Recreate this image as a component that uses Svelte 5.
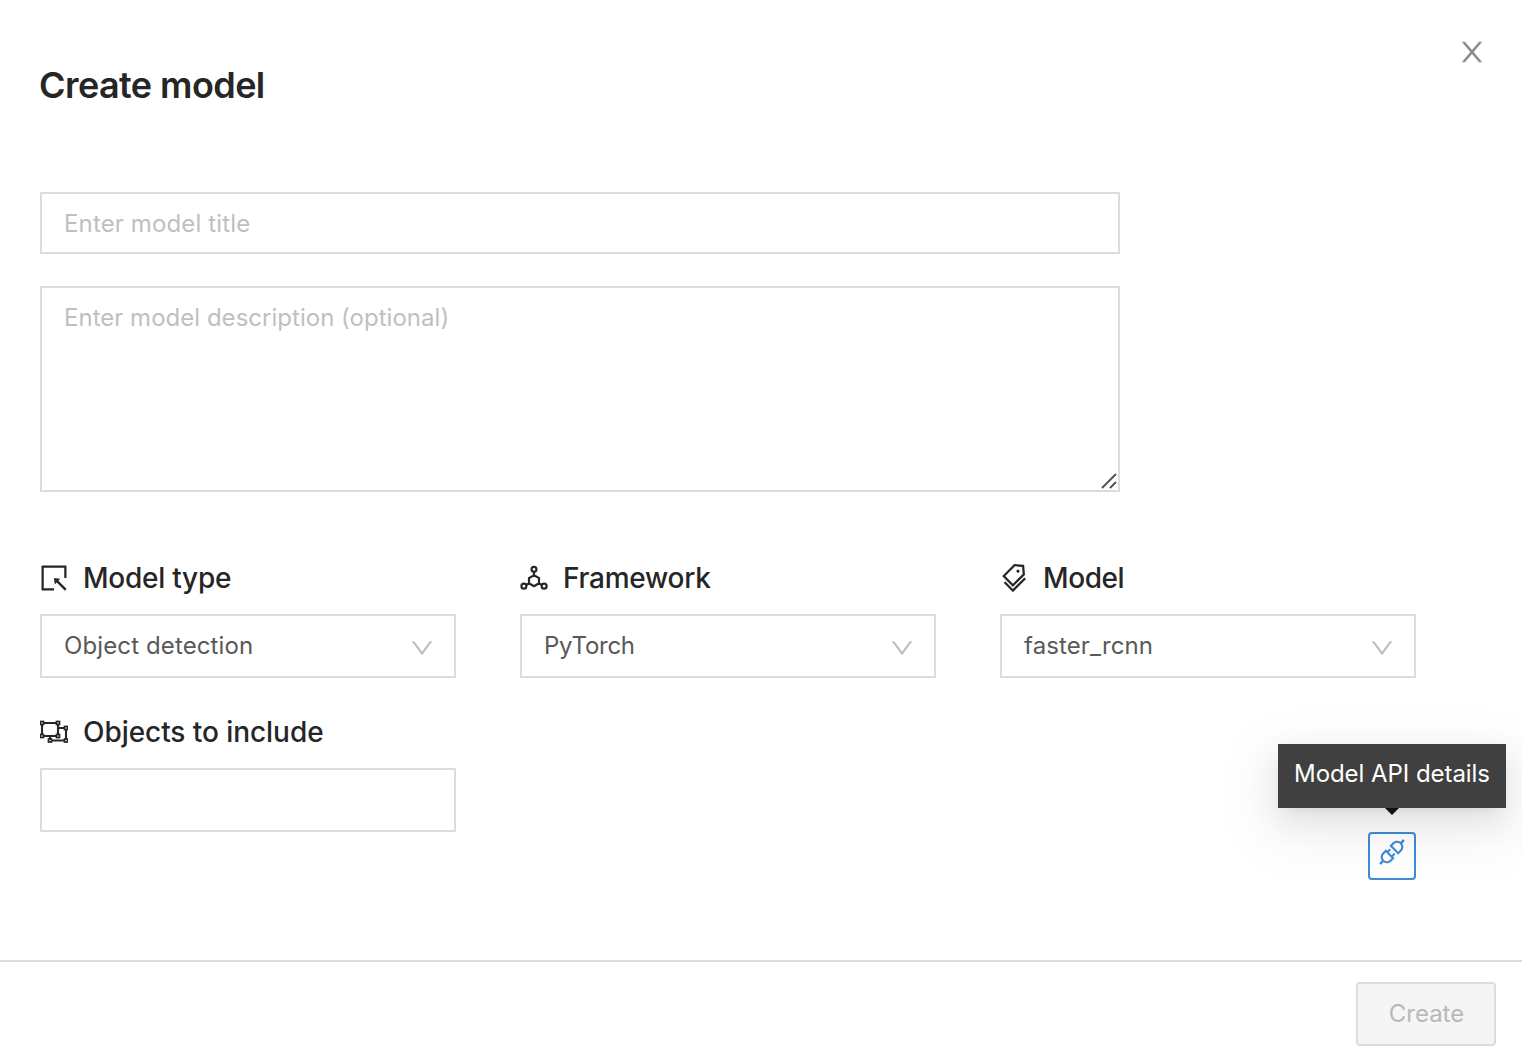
<script>
  const icons = {
    close: 'M563.8 512l262.5-312.9c4.4-5.2.7-13.1-6.1-13.1h-79.8c-4.7 0-9.2 2.1-12.3 5.7L511.6 449.8 295.1 191.7c-3-3.6-7.5-5.7-12.3-5.7H203c-6.8 0-10.5 7.9-6.1 13.1L459.4 512 196.9 824.9A7.95 7.95 0 00203 838h79.8c4.7 0 9.2-2.1 12.3-5.7l216.5-258.1 216.5 258.1c3 3.6 7.5 5.7 12.3 5.7h79.8c6.8 0 10.5-7.9 6.1-13.1L563.8 512z',
    down: 'M884 256h-75c-5.1 0-9.9 2.5-12.9 6.6L512 654.2 227.9 262.6c-3-4.1-7.8-6.6-12.9-6.6h-75c-6.5 0-10.3 7.4-6.5 12.7l352.6 486.1c12.8 17.6 39 17.6 51.7 0l352.6-486.1c3.9-5.3.1-12.7-6.4-12.7z',
    select: 'M880 112H144c-17.7 0-32 14.3-32 32v736c0 17.7 14.3 32 32 32h360c4.4 0 8-3.6 8-8v-56c0-4.4-3.6-8-8-8H184V184h656v320c0 4.4 3.6 8 8 8h56c4.4 0 8-3.6 8-8V144c0-17.7-14.3-32-32-32zM653.3 599.4l52.2-52.2a8.01 8.01 0 00-4.7-13.6l-179.4-21c-5.1-.6-9.5 3.7-8.9 8.9l21 179.4c.8 6.6 8.9 9.4 13.6 4.7l52.4-52.4 256.2 256.2c3.1 3.1 8.2 3.1 11.3 0l42.4-42.4c3.1-3.1 3.1-8.2 0-11.3L653.3 599.4z',
    tags: 'M483.2 790.3L861.4 412c1.7-1.7 2.5-4 2.3-6.3l-25.5-301.4c-.7-7.8-6.8-13.9-14.6-14.6L522.2 64.3c-2.3-.2-4.7.6-6.3 2.3L137.7 444.8a8.03 8.03 0 000 11.3l334.2 334.2c3.1 3.2 8.2 3.2 11.3 0zm62.6-651.7l224.6 19 19 224.6L477.5 694 233.9 450.5l311.9-311.9zm60.16 186.23a48 48 0 1067.88-67.89 48 48 0 10-67.88 67.89zM889.7 539.8l-39.6-39.5a8.03 8.03 0 00-11.3 0l-362 361.3-237.6-237a8.03 8.03 0 00-11.3 0l-39.6 39.5a8.03 8.03 0 000 11.3l243.2 242.8 39.6 39.5c3.1 3.1 8.2 3.1 11.3 0l407.3-406.6c3.1-3.1 3.1-8.2 0-11.3z',
    api: 'M917.7 148.8l-42.4-42.4c-1.6-1.6-3.6-2.3-5.7-2.3s-4.1.8-5.7 2.3l-76.1 76.1a199.27 199.27 0 00-112.1-34.3c-51.2 0-102.4 19.5-141.5 58.6L432.3 308.7a8.03 8.03 0 000 11.3L704 591.7c1.6 1.6 3.6 2.3 5.7 2.3 2 0 4.1-.8 5.7-2.3l101.9-101.9c68.9-69 77-175.7 24.3-253.5l76.1-76.1c3.1-3.2 3.1-8.3 0-11.4zM769.1 441.7l-59.4 59.4-186.8-186.8 59.4-59.4c24.9-24.9 58.1-38.7 93.4-38.7 35.3 0 68.4 13.7 93.4 38.7 24.9 24.9 38.7 58.1 38.7 93.4 0 35.3-13.8 68.4-38.7 93.4zm-190.2 105a8.03 8.03 0 00-11.3 0L501 613.3 410.7 523l66.7-66.7c3.1-3.1 3.1-8.2 0-11.3L441 408.6a8.03 8.03 0 00-11.3 0L363 475.3l-43-43a7.85 7.85 0 00-5.7-2.3c-2 0-4.1.8-5.7 2.3L206.8 534.2c-68.9 69-77 175.7-24.3 253.5l-76.1 76.1a8.03 8.03 0 000 11.3l42.4 42.4c1.6 1.6 3.6 2.3 5.7 2.3s4.1-.8 5.7-2.3l76.1-76.1c33.7 22.9 72.9 34.3 112.1 34.3 51.2 0 102.4-19.5 141.5-58.6l101.9-101.9c3.1-3.1 3.1-8.2 0-11.3l-43-43 66.7-66.7c3.1-3.1 3.1-8.2 0-11.3l-36.6-36.2zM441.7 769.1a131.32 131.32 0 01-93.2 38.7c-35.3 0-68.4-13.7-93.4-38.7a131.32 131.32 0 01-38.7-93.4c0-35.3 13.7-68.4 38.7-93.4l59.4-59.4 186.8 186.8-59.6 59.4z'
  };

  const fields = [
    { id: 'type', label: 'Model type', value: 'Object detection', icon: 'select' },
    { id: 'framework', label: 'Framework', value: 'PyTorch', icon: 'unit' },
    { id: 'model', label: 'Model', value: 'faster_rcnn', icon: 'tags' },
    { id: 'objects', label: 'Objects to include', value: '', icon: 'group' }
  ];
  const handles = [[2, 5], [18, 5], [2, 18], [18, 18], [26, 10], [10, 22.5], [26, 22.5]];
</script>

{#snippet glyph(name)}
  {#if name === 'unit'}
    <svg class="icon" viewBox="64 64 896 896" fill="none" stroke="currentColor" stroke-width="70">
      <circle cx="512" cy="234" r="79" />
      <circle cx="188" cy="772" r="79" />
      <circle cx="836" cy="772" r="79" />
      <path d="M512 422l160 92v168l-160 92-160-92V514zM512 313v110M352 682l-96 52M672 682l96 52" />
    </svg>
  {:else if name === 'group'}
    <svg class="icon" viewBox="0 0 28 28" fill="none" stroke="currentColor">
      <path stroke-width="2.1" d="M2 5h16v13H2zM18 10h8v12.5H10V18" />
      {#each handles as [x, y]}
        <rect x={x - 1.5} y={y - 1.5} width="3" height="3" fill="#fff" stroke-width="1.7" />
      {/each}
    </svg>
  {:else}
    <svg class="icon" viewBox="64 64 896 896" fill="currentColor"><path d={icons[name]} /></svg>
  {/if}
{/snippet}

<main>
  <header>
    <h1>Create model</h1>
    <button class="close" aria-label="Close">{@render glyph('close')}</button>
  </header>

  <section class="body">
    <input class="title" placeholder="Enter model title" />
    <div class="description">
      <textarea placeholder="Enter model description (optional)"></textarea>
      <svg class="grip" viewBox="0 0 18 18"><path d="M2 16L16 2M10 16l6-6" /></svg>
    </div>

    <div class="grid">
      {#each fields as field}
        <div class="field">
          <h2>{@render glyph(field.icon)}<span class="label {field.id}">{field.label}</span></h2>
          <div class="select">
            {#if field.value}
              <span class="value {field.id}">{field.value}</span>
              <span class="arrow">{@render glyph('down')}</span>
            {/if}
          </div>
        </div>
      {/each}
      <div class="actions">
        <div class="anchor">
          <button class="api" aria-label="Model API details">{@render glyph('api')}</button>
          <div class="tooltip"><span>Model API details</span></div>
        </div>
      </div>
    </div>
  </section>

  <footer><button class="create" disabled>Create</button></footer>
</main>

<style>
  :global(body) { background: #fff; overflow: hidden; }
  * { box-sizing: border-box; }
  main {
    width: 1522px; height: 1064px; display: flex; flex-direction: column;
    font-family: Inter, "Liberation Sans", sans-serif; font-size: 24px;
    color: #262626; background: #fff;
  }
  header {
    height: 192px; flex: none; padding: 36px 34px 0 39px;
    display: flex; justify-content: space-between; align-items: flex-start;
  }
  h1 { margin: 25px 0 0; font-size: 36px; line-height: 48px; font-weight: 600; letter-spacing: -0.57px; }
  button { font: inherit; padding: 0; }
  .icon { display: block; width: 28px; height: 28px; flex: none; }
  .close { border: 0; background: none; width: 32px; height: 32px; display: grid; place-items: center; color: #8c8c8c; }
  .body { flex: 1; padding-left: 40px; }
  .title, textarea {
    display: block; width: 1080px; border: 2px solid #dcdcdc; background: #fff; border-radius: 0;
    font: inherit; outline: 0; padding: 0 22px; letter-spacing: 0.14px;
  }
  ::placeholder { color: #bfbfbf; opacity: 1; }
  .title { height: 62px; }
  .description { position: relative; width: 1080px; margin-top: 32px; }
  textarea { height: 206px; padding-top: 12px; line-height: 36px; letter-spacing: 0.02px; resize: none; }
  .grip { position: absolute; right: 2px; bottom: 2px; width: 18px; height: 18px; stroke: #505050; stroke-width: 1.8; fill: none; }
  .grid {
    margin-top: 68px; width: 1376px; display: grid;
    grid-template-columns: repeat(3, 416px); column-gap: 64px; row-gap: 36px;
  }
  h2 { margin: 0 0 18px; height: 36px; display: flex; align-items: center; gap: 15px; font-size: 28px; line-height: 36px; font-weight: 500; }
  .label { letter-spacing: -0.25px; }
  .label.model { letter-spacing: -0.4px; }
  .label.objects { letter-spacing: -0.06px; }
  .select {
    height: 64px; border: 2px solid #dcdcdc; padding: 0 20px 0 22px;
    display: flex; align-items: center; justify-content: space-between; color: #595959;
  }
  .value { padding-bottom: 2px; letter-spacing: 0.12px; }
  .value.framework { letter-spacing: -0.25px; }
  .arrow { color: #bfbfbf; display: flex; margin-top: 4px; }
  .arrow .icon, .arrow :global(.icon) { width: 24px; height: 24px; }
  .actions { grid-column: 3; display: flex; justify-content: flex-end; align-items: flex-end; height: 166px; }
  .anchor { position: relative; width: 48px; height: 48px; }
  .api {
    width: 48px; height: 48px; border: 2px solid #428bd6; border-radius: 4px; color: #428bd6;
    background: #fff; display: flex; justify-content: center; padding-top: 4px;
  }
  .tooltip {
    position: absolute; left: -90px; bottom: 72px; width: 228px; height: 64px;
    background: #404040; color: #fff; padding: 12px 16px; line-height: 36px; white-space: nowrap;
    letter-spacing: -0.05px;
    box-shadow: 0 18px 56px 16px rgba(0, 0, 0, 0.05), 0 12px 32px rgba(0, 0, 0, 0.08), 0 6px 12px -8px rgba(0, 0, 0, 0.12);
  }
  .tooltip::after {
    content: ""; position: absolute; left: 107px; top: 64px;
    border: 7px solid transparent; border-top-color: #111; border-bottom: 0;
  }
  footer {
    height: 104px; flex: none; border-top: 2px solid #dcdcdc; padding: 20px 26px 0 0;
    display: flex; justify-content: flex-end;
  }
  .create { width: 140px; height: 64px; border: 2px solid #dcdcdc; border-radius: 4px; background: #f5f5f5; color: #b8b8b8; padding: 0 0 2px 1px; }
</style>
